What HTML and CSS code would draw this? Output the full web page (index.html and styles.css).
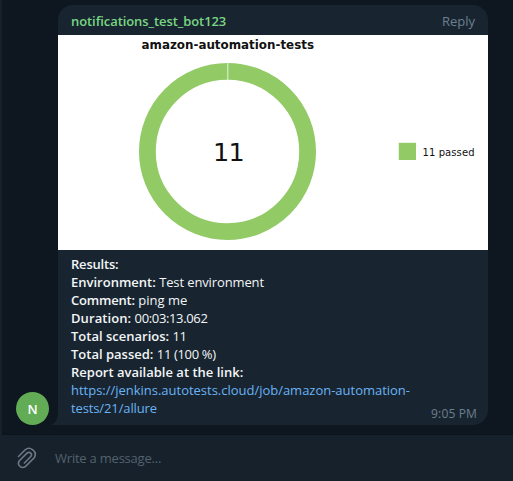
FILE: index.html
```html
<!DOCTYPE html>
<html lang="en">
<head>
<meta charset="utf-8">
<title>Chat</title>
<link rel="stylesheet" href="styles.css">
</head>
<body>
<div class="app">
  <main class="history">
    <div class="avatar">N</div>
    <article class="bubble">
      <svg class="tail" viewBox="0 0 6 14"><path d="M6 0V14H0V13.300C4 11.500 6 7 6 0Z"/></svg>
      <header class="bubble-head"><span class="sender">notifications_test_bot123</span><span class="reply">Reply</span></header>
      <svg class="chart" viewBox="0 0 430 215">
        <rect width="430" height="215" fill="#fff"/>
        <text class="chart-title" x="83.500" y="13.500" textLength="172.500" lengthAdjust="spacingAndGlyphs">amazon-automation-tests</text>
        <circle cx="169.500" cy="116.500" r="80.100" fill="none" stroke="#92ca66" stroke-width="16.800"/>
        <path d="M169.800 28V45.500" stroke="#e4f3d9" stroke-width="1"/>
        <text class="chart-total" x="155" y="126">11</text>
        <rect x="340.800" y="107.800" width="17.200" height="17.200" fill="#92ca66"/>
        <text class="chart-legend" x="364.500" y="121" textLength="52" lengthAdjust="spacing">11 passed</text>
      </svg>
      <div class="body">
        <p><b class="snug">Results:</b></p>
        <p><b>Environment:</b> <span class="value">Test environment</span></p>
        <p><b class="snug">Comment:</b> <span>ping me</span></p>
        <p><b class="loose">Duration:</b> <span class="digits">00:03:13.062</span></p>
        <p><b>Total scenarios:</b> <span class="digits">11</span></p>
        <p><b>Total passed:</b> <span class="digits">11 (100 %)</span></p>
        <p><b>Report available at the link:</b></p>
        <p class="link">https://jenkins.autotests.cloud/job/amazon-automation-<br><span class="value">tests/21/allure</span></p>
        <time class="time">9:05 PM</time>
      </div>
    </article>
  </main>
  <footer class="composer">
    <svg class="clip" viewBox="0 0 20 22"><path d="M1.500 9.500L8.200 2.800C12.800-1.200 21 4.500 17.200 10.800L8.600 19.400C4.500 22.500-.5 17.800 2.400 13.800L10 6.200C12.800 3.800 16 7.300 13.600 9.800L7.400 16"/></svg>
    <span class="placeholder">Write a message...</span>
  </footer>
</div>
</body>
</html>
```
FILE: styles.css
```css
* { box-sizing: border-box; }
body { margin: 0; background: #0e1621; font-family: "Open Sans", "Noto Sans", sans-serif; font-size: 13px; }
.app { display: flex; flex-direction: column; width: 513px; height: 481px; border-left: 2px solid #16212b; overflow: hidden; }
.history { display: flex; align-items: flex-end; gap: 9px; height: 434px; padding: 5px 25px 9px 14px; background: #0e1620; }
.avatar { width: 33px; height: 33px; border-radius: 50%; background: #62ac55; color: #fff; font-weight: 600; line-height: 34px; text-align: center; }
.bubble { position: relative; width: 430px; height: 420px; border-radius: 15px 15px 15px 0; background: #182531; color: #f3f5f6; }
.tail { position: absolute; left: -6px; bottom: 0; width: 6px; height: 14px; fill: #182531; }
.bubble-head { display: flex; justify-content: space-between; height: 30px; padding: 1px 13px 0; line-height: 30px; }
.sender { color: #78d783; font-weight: 600; letter-spacing: -.08px; }
.reply { color: #6d7f8f; }
.chart { display: block; width: 430px; height: 215px; }
.chart text { font-family: "DejaVu Sans", sans-serif; fill: #111; }
.chart .chart-title { font-size: 11.500px; font-weight: 700; }
.chart-total { font-size: 25.500px; letter-spacing: -.8px; }
.chart-legend { font-size: 10px; }
.body { position: relative; height: 175px; padding: 5px 13px 0; line-height: 18px; }
.body p { margin: 0; white-space: nowrap; }
.body b { font-weight: 600; }
.body .snug { letter-spacing: -.2px; }
.body .loose { letter-spacing: .08px; }
.value { letter-spacing: -.12px; }
.digits { letter-spacing: -.35px; }
.body .link { color: #6ab3f3; letter-spacing: -.015px; }
.time { position: absolute; right: 11px; bottom: 2px; color: #6d7f8f; font-size: 12px; letter-spacing: .15px; }
.composer { display: flex; align-items: center; gap: 18px; height: 47px; padding: 0 15px; border-top: 1px solid #0b131b; background: #17212b; }
.clip { width: 20px; height: 22px; fill: none; stroke: #6c7883; stroke-width: 1.600; stroke-linecap: round; }
.placeholder { color: #53616d; letter-spacing: -.22px; padding-bottom: 1px; }
```
